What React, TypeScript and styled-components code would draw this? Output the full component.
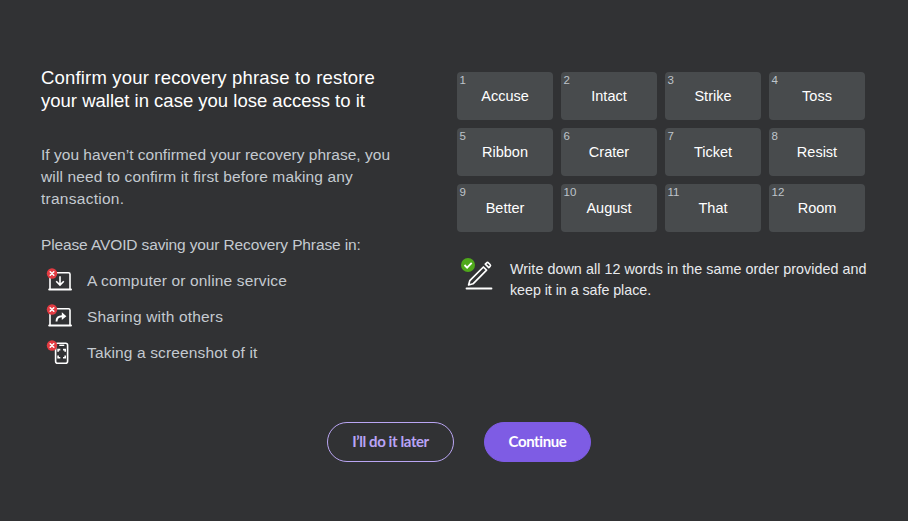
import React from "react";
import styled, { createGlobalStyle } from "styled-components";

const GlobalStyle = createGlobalStyle`
  * { box-sizing: border-box; }
  body { margin: 0; background: #313234; }
`;

const Page = styled.main`
  width: 908px;
  height: 521px;
  padding: 67px 38px 0 41px;
  background: #313234;
  color: #c4cad0;
  font-family: "Liberation Sans", Arial, sans-serif;
  font-size: 15.5px;
  line-height: 22px;
`;

const Columns = styled.div`
  display: grid;
  grid-template-columns: 376px 413px;
  column-gap: 40px;
  height: 355px;
`;

const Line = styled.span<{ $track?: number }>`
  display: block;
  width: max-content;
  white-space: nowrap;
  letter-spacing: ${(p) => p.$track ?? 0}px;
`;

const Heading = styled.h1`
  margin: 0 0 32px;
  color: #fff;
  font-size: 18.5px;
  font-weight: 400;
  line-height: 22.5px;
`;

const Copy = styled.p`
  margin: 0 0 24px;
`;

const AvoidList = styled.ul`
  list-style: none;
  margin: -17px 0 0;
  padding: 0;
`;

const AvoidItem = styled.li`
  display: grid;
  grid-template-columns: 46px 1fr;
  align-items: center;
  height: 36px;
`;

const ItemIcon = styled.svg`
  display: block;
  width: 34px;
  height: 32px;
`;

const WordGrid = styled.ol`
  list-style: none;
  margin: 5px 0 0;
  padding: 0;
  display: grid;
  grid-template-columns: repeat(4, 96px);
  grid-auto-rows: 48px;
  gap: 8px;
`;

const WordCell = styled.li`
  position: relative;
  display: flex;
  align-items: center;
  justify-content: center;
  border-radius: 4px;
  background: #484b4d;
  color: #fff;
  font-size: 14.5px;
`;

const WordNumber = styled.span`
  position: absolute;
  top: 2px;
  left: 2.5px;
  color: #bec4ca;
  font-size: 11.5px;
  line-height: 13px;
`;

const Advice = styled.div`
  display: grid;
  grid-template-columns: 53px 1fr;
  margin-top: 27px;
  color: #e8eaed;
  font-size: 14.3px;
  line-height: 21px;
`;

const PencilIcon = styled.svg`
  display: block;
  width: 40px;
  height: 36px;
  margin-top: -3px;
`;

const Actions = styled.div`
  display: flex;
  gap: 30px;
  padding-left: 286px;
`;

const Button = styled.button<{ $primary?: boolean }>`
  display: flex;
  align-items: center;
  justify-content: center;
  width: ${(p) => (p.$primary ? 107 : 127)}px;
  height: 40px;
  padding: 0 0 2px;
  border: 1px solid ${(p) => (p.$primary ? "#7e5ce4" : "#baa6f3")};
  border-radius: 20px;
  background: ${(p) => (p.$primary ? "#7e5ce4" : "transparent")};
  color: ${(p) => (p.$primary ? "#fff" : "#b9a4f6")};
  font-family: Lato, sans-serif;
  font-size: 15px;
  font-weight: 700;
  letter-spacing: -0.4px;
`;

const RejectMark = () => (
  <>
    <circle cx="11" cy="8.5" r="5.2" fill="#e23b42" />
    <path d="M9.2 6.7l3.6 3.6M12.8 6.7l-3.6 3.6" stroke="#fff" strokeWidth="1.5" strokeLinecap="round" />
  </>
);

const Laptop = () => (
  <>
    <path d="M9 24V9.3a1.5 1.5 0 0 1 1.5-1.5h17a1.5 1.5 0 0 1 1.5 1.5V24" stroke="#fff" strokeWidth="1.6" />
    <path d="M8.2 24.4h21.8" stroke="#fff" strokeWidth="2" strokeLinecap="round" />
  </>
);

const DownloadIcon = () => (
  <ItemIcon viewBox="0 0 34 32" fill="none">
    <Laptop />
    <path d="M19 11.3v8.7M15.2 16.2l3.8 3.8 3.8-3.8" stroke="#fff" strokeWidth="1.6" />
    <RejectMark />
  </ItemIcon>
);

const ShareIcon = () => (
  <ItemIcon viewBox="0 0 34 32" fill="none">
    <Laptop />
    <path d="M15.5 20.5q0-5.3 5.5-5.3h1" stroke="#fff" strokeWidth="1.9" />
    <path d="M20.8 11.3l4.6 3.9-4.6 3.9z" fill="#fff" />
    <RejectMark />
  </ItemIcon>
);

const ScreenshotIcon = () => (
  <ItemIcon viewBox="0 0 34 32" fill="none">
    <rect x="14.6" y="6.2" width="12" height="20" rx="2" stroke="#fff" strokeWidth="1.6" />
    <path d="M18.3 8.3h5" stroke="#fff" strokeWidth="1.4" />
    <path d="M19.3 12.6h-2.2v2.2M22 12.6h2.2v2.2M17.1 18.5v2.2h2.2M24.2 18.5v2.2H22" stroke="#fff" strokeWidth="1.6" />
    <RejectMark />
  </ItemIcon>
);

const avoid = [
  { text: "A computer or online service", track: 0.16, Icon: DownloadIcon },
  { text: "Sharing with others", track: 0.18, Icon: ShareIcon },
  { text: "Taking a screenshot of it", track: 0.13, Icon: ScreenshotIcon },
];

const words = ["Accuse", "Intact", "Strike", "Toss", "Ribbon", "Crater", "Ticket", "Resist", "Better", "August", "That", "Room"];

export default function App() {
  return (
    <Page>
      <GlobalStyle />
      <Columns>
        <section>
          <Heading>
            <Line $track={0.18}>Confirm your recovery phrase to restore</Line>
            <Line>your wallet in case you lose access to it</Line>
          </Heading>
          <Copy>
            <Line $track={0.02}>If you haven’t confirmed your recovery phrase, you</Line>
            <Line $track={0.13}>will need to confirm it first before making any</Line>
            <Line $track={0.26}>transaction.</Line>
          </Copy>
          <Copy>
            <Line $track={-0.13}>Please AVOID saving your Recovery Phrase in:</Line>
          </Copy>
          <AvoidList>
            {avoid.map(({ text, track, Icon }) => (
              <AvoidItem key={text}>
                <Icon />
                <Line $track={track}>{text}</Line>
              </AvoidItem>
            ))}
          </AvoidList>
        </section>
        <section>
          <WordGrid>
            {words.map((word, i) => (
              <WordCell key={word}>
                <WordNumber>{i + 1}</WordNumber>
                {word}
              </WordCell>
            ))}
          </WordGrid>
          <Advice>
            <PencilIcon viewBox="0 0 40 36" fill="none">
              <path d="M9.5 32.5h25" stroke="#fff" strokeWidth="1.8" strokeLinecap="round" />
              <path d="M12.8 24.6L26.4 11l3.2 3.2L16 27.8l-4.4 1.2zM28.3 8.2l1.2-1.2q1-1 2 0l1.5 1.5q1 1 0 2l-1.2 1.2z" stroke="#fff" strokeWidth="1.7" strokeLinejoin="round" />
              <circle cx="11" cy="9" r="7" fill="#4fa81b" />
              <path d="M7.5 9l2.6 2.6 4.6-4.8" stroke="#fff" strokeWidth="1.8" />
            </PencilIcon>
            <div>
              <Line $track={0.06}>Write down all 12 words in the same order provided and</Line>
              <Line $track={-0.05}>keep it in a safe place.</Line>
            </div>
          </Advice>
        </section>
      </Columns>
      <Actions>
        <Button>I’ll do it later</Button>
        <Button $primary>Continue</Button>
      </Actions>
    </Page>
  );
}
